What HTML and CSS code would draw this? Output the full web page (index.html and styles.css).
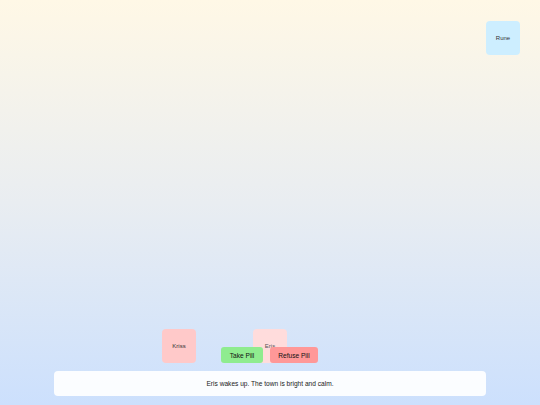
FILE: index.html
```html
<!DOCTYPE html>
<html>
<head>
<meta charset="utf-8">
<link rel="stylesheet" href="styles.css">
</head>
<body>
<div class="scene">
  <div class="npc rune">Rune</div>
  <div class="npc kriss">Kriss</div>
  <div class="npc eris">Eris</div>
  <div class="choices">
    <button class="btn take">Take Pill</button>
    <button class="btn refuse">Refuse Pill</button>
  </div>
  <div class="dialog">Eris wakes up. The town is bright and calm.</div>
</div>
</body>
</html>
```
FILE: styles.css
```css
html, body {
  margin: 0;
  padding: 0;
  width: 540px;
  height: 405px;
  overflow: hidden;
}
body {
  font-family: "Liberation Sans", Arial, sans-serif;
  color: #222;
}
.scene {
  position: relative;
  width: 540px;
  height: 405px;
  background: linear-gradient(to bottom, #fff8e6 0%, #e9edf1 50%, #cce0fd 100%);
}
.npc {
  position: absolute;
  width: 34px;
  height: 34px;
  border-radius: 4px;
  display: flex;
  align-items: center;
  justify-content: center;
  font-size: 6px;
  color: #333;
}
.rune { left: 486px; top: 21px; background: #cdeeff; }
.kriss { left: 162px; top: 329px; background: #ffc9c9; }
.eris { left: 253px; top: 329px; background: #ffdcdc; color: #555; }
.choices {
  position: absolute;
  left: 221px;
  top: 347px;
  display: flex;
  gap: 7px;
}
.btn {
  border: none;
  border-radius: 3px;
  height: 16px;
  padding: 0;
  font-family: "Liberation Sans", Arial, sans-serif;
  font-size: 6.6px;
  color: #111;
}
.take { background: #8fec8f; width: 42px; }
.refuse { background: #ff9898; width: 48px; }
.dialog {
  position: absolute;
  left: 54px;
  top: 371px;
  width: 432px;
  height: 25px;
  border-radius: 4px;
  background: rgba(255, 255, 255, 0.92);
  display: flex;
  align-items: center;
  justify-content: center;
  font-size: 6.6px;
  color: #222;
}
```
